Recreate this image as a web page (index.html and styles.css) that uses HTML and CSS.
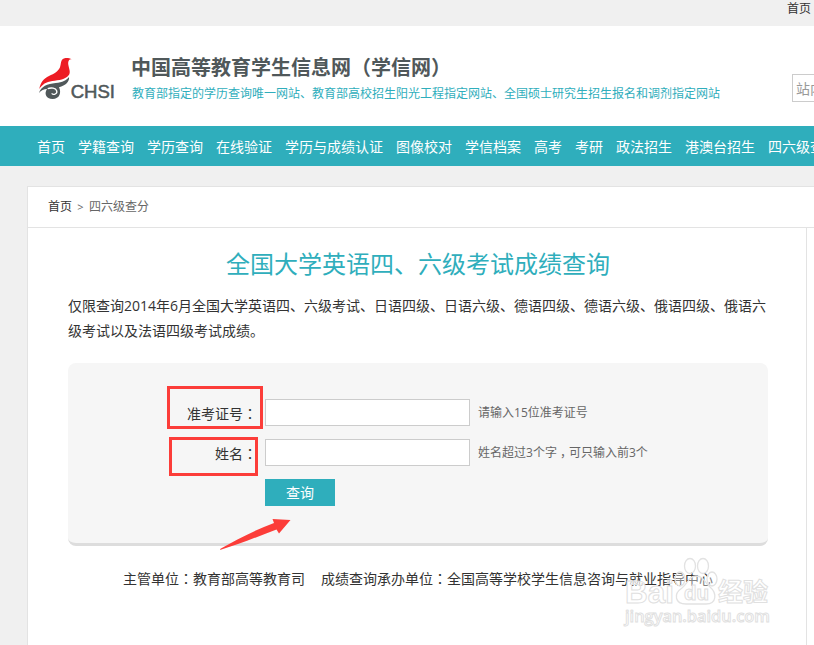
FILE: index.html
```html
<!DOCTYPE html>
<html lang="zh-CN">
<head>
<meta charset="utf-8">
<title>全国大学英语四、六级考试成绩查询</title>
<link rel="stylesheet" href="styles.css">
</head>
<body>
<div class="topbar"><a>首页</a></div>
<header class="header">
  <svg class="logo" width="80" height="46" viewBox="0 0 240 138">
    <path fill="#ed1c24" d="M19 93C22 75 32 61 48 54C64 48 77 39 81 28C85 17 82 4 95 1C101-1 110 1 116 4C107 4 105 10 106 20C108 33 114 42 107 52C97 65 78 67 58 69C39 72 28 79 19 93Z"/>
    <path fill="#50585a" d="M18 105C24 85 43 78 68 75C89 73 100 67 108 57C110 71 98 82 78 88C86 104 80 123 59 123C38 123 33 106 42 93C33 93 24 97 18 105Z"/>
    <path fill="none" stroke="#fff" stroke-width="4" d="M44 92C55 88 68 90 71 98C74 107 62 113 56 106"/>
    <text class="logo-text" x="113" y="120" textLength="133" lengthAdjust="spacingAndGlyphs">CHSI</text>
  </svg>
  <div class="brand">
    <div class="brand-name">中国高等教育学生信息网（学信网）</div>
    <div class="brand-note">教育部指定的学历查询唯一网站、教育部高校招生阳光工程指定网站、全国硕士研究生招生报名和调剂指定网站</div>
  </div>
  <div class="search">站内搜索</div>
</header>
<nav class="nav">
  <a>首页</a><a>学籍查询</a><a>学历查询</a><a>在线验证</a><a>学历与成绩认证</a><a>图像校对</a><a>学信档案</a><a>高考</a><a>考研</a><a>政法招生</a><a>港澳台招生</a><a>四六级查分</a>
</nav>
<div class="card">
  <div class="crumbs"><a>首页</a><span class="sep">&gt;</span><span>四六级查分</span></div>
  <main class="main">
    <h1>全国大学英语四、六级考试成绩查询</h1>
    <p class="intro">仅限查询<span class="num">2014</span>年<span class="num">6</span>月全国大学英语四、六级考试、日语四级、日语六级、德语四级、德语六级、俄语四级、俄语六级考试以及法语四级考试成绩。</p>
    <form class="panel">
      <div class="row"><label for="ticket">准考证号<span class="mid" lang="zh-TW">：</span></label><input id="ticket" type="text"><span class="hint">请输入<span class="num">15</span>位准考证号</span></div>
      <div class="row"><label for="name">姓名<span class="mid" lang="zh-TW">：</span></label><input id="name" type="text"><span class="hint">姓名超过<span class="num">3</span>个字<span class="comma">，</span>可只输入前<span class="num">3</span>个</span></div>
      <button type="button">查询</button>
      <i class="mark mark-ticket"></i>
      <i class="mark mark-name"></i>
      <svg class="arrow" width="74" height="34" viewBox="0 0 74 34"><path fill="#fc3d39" d="M1 32L1.5 30.8C17 22 36 12 55 5L53.5 1L71.5 2L60 15.5L57.5 11.5C40 18 20 26.5 1 32Z"/></svg>
    </form>
    <div class="orgs"><span>主管单位<span class="mid" lang="zh-TW">：</span>教育部高等教育司</span><span>成绩查询承办单位<span class="mid" lang="zh-TW">：</span>全国高等学校学生信息咨询与就业指导中心</span></div>
  </main>
</div>
<svg class="watermark" width="154" height="76" viewBox="0 0 154 76">
  <g class="wm-line">
    <ellipse cx="69" cy="12" rx="5.5" ry="7.5"/>
    <ellipse cx="82" cy="12" rx="5.5" ry="7.5"/>
    <ellipse cx="59" cy="25" rx="5" ry="7"/>
    <ellipse cx="91" cy="25" rx="5" ry="7"/>
    <path d="M75 22C68 22 67 29 61 34C52 40 54 50 65 50L85 50C96 50 96 39 89 33C83 28 83 22 75 22Z"/>
  </g>
  <g class="wm-text">
    <text x="4" y="49" font-size="32" textLength="49" lengthAdjust="spacingAndGlyphs">Bai</text>
    <text x="63" y="46" font-size="20" textLength="25" lengthAdjust="spacingAndGlyphs">du</text>
    <text x="97" y="47" font-size="25" textLength="50">经验</text>
    <text class="wm-url" x="4" y="68" font-size="17" textLength="145" lengthAdjust="spacingAndGlyphs">jingyan.baidu.com</text>
  </g>
</svg>
</body>
</html>
```
FILE: styles.css
```css
* { box-sizing: border-box; }
html, body { height: 100%; }
body {
  margin: 0;
  position: relative;
  overflow: hidden;
  display: flex;
  flex-direction: column;
  background: #f0f0f0;
  color: #333;
  font: 14px/20px "Noto Sans CJK SC", sans-serif;
}
.topbar {
  flex: none;
  height: 26px;
  padding-left: 787px;
  font-size: 12px;
  line-height: 16px;
  white-space: nowrap;
}
.header {
  flex: none;
  display: flex;
  height: 100px;
  padding-left: 33px;
  background: #fff;
  white-space: nowrap;
}
.logo { flex: none; margin: 32px 18px 0 0; overflow: visible; }
.logo-text { font: 53px "Liberation Sans", sans-serif; fill: #50585a; stroke: #50585a; stroke-width: 1.5; }
.brand { flex: none; width: 661px; padding-top: 26px; }
.brand-name { font-size: 20px; line-height: 30px; font-weight: 700; color: #50585a; }
.brand-note { padding-left: 1px; font-size: 12px; line-height: 22px; color: #2faebc; }
.search {
  flex: none;
  width: 160px;
  height: 28px;
  margin-top: 48px;
  padding-left: 3px;
  border: 1px solid #ccc;
  line-height: 27px;
  color: #999;
}
.nav {
  flex: none;
  display: flex;
  gap: 13px;
  height: 40px;
  padding-left: 37px;
  background: #2faebc;
  color: #fff;
  line-height: 41px;
  white-space: nowrap;
}
.card {
  flex: 1;
  display: flex;
  flex-direction: column;
  width: 1000px;
  margin: 20px 0 0 27px;
  border: 1px solid #e3e3e3;
  border-bottom: 0;
  background: #fff;
}
.crumbs {
  display: flex;
  height: 41px;
  padding-left: 20px;
  border-bottom: 1px solid #e3e3e3;
  color: #666;
  font-size: 12px;
  line-height: 38px;
}
.crumbs a { color: #333; }
.sep { width: 17px; text-align: center; font: 11px/40px "Open Sans", sans-serif; }
.main {
  flex: 1;
  width: 779px;
  padding: 15px 38px 0 40px;
  border-right: 1px solid #e3e3e3;
}
h1 {
  margin: 0;
  font-size: 24px;
  line-height: 40px;
  font-weight: 400;
  text-align: center;
  color: #2faebc;
}
.intro { margin: 10px 0 20px; line-height: 25px; }
.num { font-family: "Open Sans", sans-serif; line-height: 1; }
.panel {
  position: relative;
  height: 183px;
  padding-top: 36px;
  border-bottom: 3px solid #ddd;
  border-radius: 8px;
  background: #f6f6f6;
}
.row { display: flex; height: 27px; margin-bottom: 13px; }
.row label { width: 189px; margin-right: 8px; text-align: right; line-height: 29px; }
.row input { width: 205px; height: 27px; padding: 0 4px; border: 1px solid #ccc; background: #fff; }
.hint { margin-left: 8px; font-size: 12px; line-height: 26px; color: #666; }
.mid { font-family: "Noto Sans CJK TC", sans-serif; }
.comma { position: relative; left: 3px; }
button {
  display: block;
  width: 70px;
  height: 27px;
  margin-left: 197px;
  padding: 0 0 2px;
  border: 0;
  background: #2faebc;
  color: #fff;
  font: inherit;
}
.mark { position: absolute; border: 3px solid #fc3d39; }
.mark-ticket { left: 99px; top: 23px; width: 96px; height: 43px; }
.mark-name { left: 101px; top: 74px; width: 89px; height: 39px; }
.arrow { position: absolute; left: 151px; top: 155px; }
.orgs {
  display: flex;
  justify-content: center;
  gap: 16px;
  padding-top: 22px;
  white-space: nowrap;
}
.watermark { position: absolute; left: 621px; top: 554px; overflow: visible; }
.wm-line { fill: rgba(255, 255, 255, .4); stroke: #e2e2e2; stroke-width: 1.3; }
.wm-text {
  font-family: "Liberation Sans", "Noto Sans CJK SC", sans-serif;
  font-weight: 700;
  fill: #fff;
  fill-opacity: .7;
  stroke: #e0e0e0;
  stroke-width: 1;
}
.wm-url { font-family: "Open Sans", sans-serif; font-weight: 600; }
```
